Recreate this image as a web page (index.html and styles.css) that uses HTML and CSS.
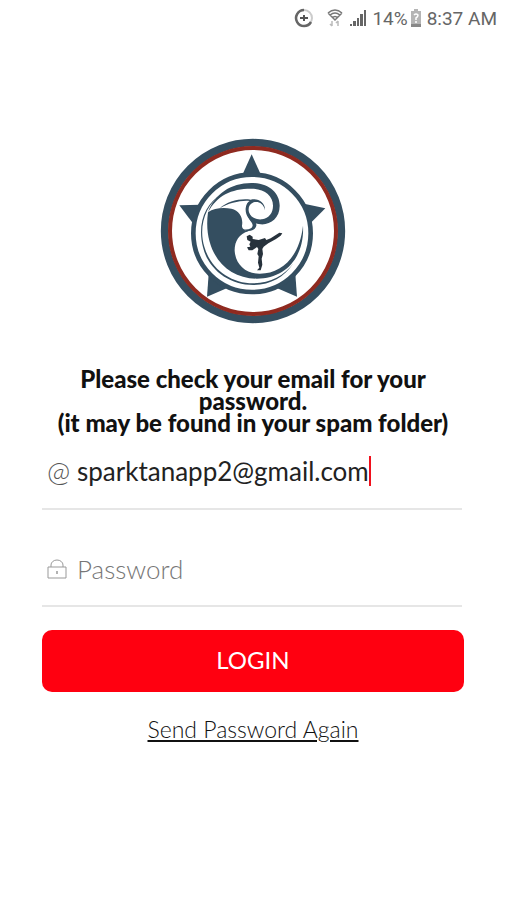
FILE: index.html
```html
<!DOCTYPE html>
<html lang="en">
<head>
  <meta charset="UTF-8" />
  <meta name="viewport" content="width=device-width, initial-scale=1" />
  <title>Login</title>
  <link rel="stylesheet" href="styles.css">
</head>
<body>

<header class="status-bar">
  <svg class="saver-icon" viewBox="0 0 20 20" aria-hidden="true">
    <circle cx="10" cy="10" r="8" fill="none" stroke="#ccc" stroke-width="2" />
    <path d="M10 2A8 8 0 1 0 17 14" fill="none" stroke="#666" stroke-width="2.5" />
    <path d="M6 10h8M10 7v6" stroke="#555" stroke-width="2" />
  </svg>
  <svg class="wifi-icon" viewBox="0 0 16 18" aria-hidden="true">
    <g fill="none" stroke="#777" stroke-width="1.5">
      <path d="M1 4Q8 -2 15 4M3 6Q8 2 13 6M5 9Q8 6 11 9M1 4L8 11L15 4" />
      <path d="M5 12v5M3 15l2 2M11 17v-5M9 14l2-2" stroke="#bbb" />
    </g>
  </svg>
  <svg class="signal-icon" viewBox="0 0 18 18" aria-hidden="true">
    <path d="M1 15h2v2H1zM4 12h3v5H4zM8 9h2v8H8zM11 5h3v12h-3zM15 1h2v16h-2z" fill="#666" />
  </svg>
  <span class="battery-level">14%</span>
  <svg class="battery-icon" viewBox="0 0 12 18" aria-hidden="true">
    <path d="M4 0h4v2h3v16H1V2h3z" fill="#b5b5b5" />
    <path d="M1 15h10v3H1z" fill="#888" />
    <path d="M4 6q2-2 4 0q0 2-2 3v2M6 12v2" fill="none" stroke="#fff" stroke-width="1.5" />
  </svg>
  <span class="clock">8:37 AM</span>
</header>

<main class="container">
  <svg class="logo" viewBox="18 17 558 558" role="img" aria-label="Karate club logo">
    <circle cx="297" cy="296" r="265" fill="#fff" stroke="#344e60" stroke-width="23" />
    <circle cx="297" cy="296" r="249" fill="none" stroke="#8f2a20" stroke-width="12" />
    <g fill="#344e60">
      <path d="M293 66L322 130H264z" />
      <path d="M514 228L450 214L470 272z" />
      <path d="M429 493L424 425L370 468z" />
      <path d="M159 493L164 425L218 468z" />
      <path d="M76 219L140 217L116 272z" />
    </g>
    <circle cx="294" cy="303" r="176" fill="#fff" stroke="#344e60" stroke-width="14" />
    <!-- wave body -->
    <path d="M162 240C180 226 210 225 232 229C258 235 268 258 264 280C264 290 273 295 284 297C254 304 241 330 242 356C245 397 275 424 316 424C384 425 437 372 447 280C452 371 398 439 308 439C213 439 146 356 162 240z" fill="#344e60" />
    <path d="M205 185C153 216 133 285 151 343C169 409 230 454 300 453C350 452 391 430 418 393C390 435 350 458 298 458C225 458 163 411 147 345C130 278 150 214 205 185z" fill="#344e60" />
    <!-- curl -->
    <path d="M162 240C181 186 230 152 292 152C347 152 378 184 377 221C377 257 350 278 320 276C291 274 273 252 275 228C276 216 281 209 287 206C265 203 224 211 196 229C221 206 257 198 290 202C313 196 334 211 333 233C328 213 313 206 299 210C287 215 281 226 285 240C290 256 308 263 324 261C345 258 357 241 357 220C357 190 330 169 291 169C231 169 189 190 162 240z" fill="#344e60" />
    <path d="M284 252C293 263 309 268 307 280C303 297 278 301 264 290C280 294 294 290 296 280C296 270 284 265 284 252z" fill="#344e60" />
    <!-- kicking fighter -->
    <path d="M278 312L287 307L296 313L296 320L314 323L333 317L337 323L350 318L376 301L385 303L380 310L366 320L343 333L329 343L325 350L327 365L323 379L325 397L320 414L309 414L316 406L312 391L314 372L310 365L313 350L309 344L295 354L284 354L279 345L289 343L286 336L290 328L280 323z" fill="#27323c" />
  </svg>

  <h1 class="message">Please check your email for your password.<br>(it may be found in your spam folder)</h1>

  <form class="login-form">
    <div class="field">
      <label class="at-sign" for="email" aria-label="Email">@</label>
      <input class="email" type="text" id="email" value="sparktanapp2@gmail.com" size="22" />
      <span class="caret"></span>
    </div>

    <div class="field">
      <label class="lock" for="password" aria-label="Password">
        <svg viewBox="0 0 20 20" aria-hidden="true">
          <path d="M1 8h18v11H1zM4 8V6a6 5 0 0 1 12 0v2" fill="none" stroke="#999" />
          <path d="M10 12v3" stroke="#999" stroke-width="1.5" />
        </svg>
      </label>
      <input class="password" type="password" id="password" placeholder="Password" />
    </div>

    <button class="login-button" type="button">LOGIN</button>
  </form>

  <a class="resend" href="#">Send Password Again</a>
</main>

</body>
</html>
```
FILE: styles.css
```css
body {
  font-family: Lato, "Liberation Sans", sans-serif;
  background-color: #fff;
  color: #111;
  margin: 0;
}

.status-bar {
  display: flex;
  justify-content: flex-end;
  align-items: center;
  height: 36px;
  padding: 0 9px;
  font-family: Roboto, sans-serif;
  font-size: 19px;
  color: #666;
}

.saver-icon {
  width: 20px;
  height: 20px;
  margin-right: 13px;
}

.wifi-icon {
  width: 16px;
  height: 18px;
  margin-right: 6px;
}

.signal-icon {
  width: 18px;
  height: 18px;
  margin-right: 5px;
}

.battery-icon {
  width: 12px;
  height: 18px;
  margin: 0 5px 0 2px;
}

.container {
  display: flex;
  flex-direction: column;
  align-items: center;
  padding: 102px 42px 0;
}

.logo {
  width: 186px;
  height: 186px;
}

.message {
  margin: 44px 0 0;
  font-size: 24px;
  font-weight: 900;
  line-height: 22px;
  text-align: center;
}

.login-form {
  width: 100%;
}

.field {
  display: flex;
  align-items: center;
  height: 74px;
  margin-right: 2px;
  border-bottom: 2px solid #e6e6e6;
}

.field + .field {
  height: 72px;
  margin-top: 23px;
}

.field label {
  width: 24px;
  margin: 0 6px 0 5px;
}

.field input {
  padding: 0;
  border: none;
  outline: none;
  background: none;
  font: inherit;
  font-size: 26px;
  color: #222;
}

.field .at-sign {
  font-size: 28px;
  font-weight: 300;
  color: #555;
}

.lock svg {
  display: block;
  width: 20px;
  height: 20px;
}

.email {
  field-sizing: content;
}

.caret {
  width: 2px;
  height: 30px;
  background-color: #f0101c;
}

.password {
  flex: 1;
}

.field .password {
  font-weight: 300;
}

.password::placeholder {
  color: #777;
}

.login-button {
  width: 100%;
  height: 62px;
  margin-top: 23px;
  padding: 0 0 4px;
  border: none;
  border-radius: 10px;
  background-color: #ff0010;
  color: #fff;
  font: inherit;
  font-size: 24px;
  cursor: pointer;
}

.resend {
  margin-top: 24px;
  font-size: 23px;
  font-weight: 300;
  line-height: 26px;
  color: #111;
}
```
